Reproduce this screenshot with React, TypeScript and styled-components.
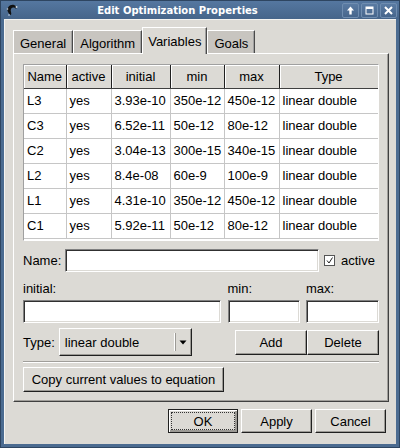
import React from "react";
import styled, { createGlobalStyle, css } from "styled-components";

const Global = createGlobalStyle`
  html, body { margin: 0; padding: 0; background: #4a6a8e; }
  body { font-family: "Liberation Sans", Arial, sans-serif; font-size: 13px; color: #000; }
  * { box-sizing: border-box; }
`;

const BG = "#dcdad5";

const Window = styled.div`
  width: 400px;
  height: 448px;
  display: flex;
  flex-direction: column;
  background: #4b6b90;
  border: 1px solid #2e4561;
`;

const TitleBar = styled.div`
  height: 18px;
  display: flex;
  align-items: center;
  padding: 0 2px 0 4px;
  background: linear-gradient(#5577a0, #46658a);
`;

const TitleText = styled.div`
  flex: 1;
  text-align: center;
  color: #fff;
  font-family: "DejaVu Sans", sans-serif;
  font-weight: bold;
  font-size: 10px;
  padding-right: 6px;
`;

const TitleButtons = styled.div`
  display: flex;
  gap: 2px;
`;

const TitleButton = styled.div`
  width: 17px;
  height: 15px;
  border-radius: 2px;
  border: 1px solid #6f8db0;
  background: linear-gradient(#5a7ba3, #47668c);
  display: flex;
  align-items: center;
  justify-content: center;
`;

const Client = styled.div`
  flex: 1;
  margin: 0 3px 3px 3px;
  background: ${BG};
  border-top: 1px solid #f4f3f0;
  border-left: 1px solid #f4f3f0;
  padding: 7px 8px 0 8px;
  display: flex;
  flex-direction: column;
`;

const TabBar = styled.div`
  display: flex;
  align-items: flex-end;
  height: 26px;
`;

const Tab = styled.div<{ $active?: boolean }>`
  height: ${(p) => (p.$active ? 27 : 23)}px;
  padding: 0 ${(p) => (p.$active ? 5 : 6)}px;
  display: flex;
  align-items: center;
  background: ${(p) => (p.$active ? BG : "#c8c5c0")};
  border-top: 1px solid #fff;
  border-left: 1px solid #fff;
  border-right: 1px solid #4a4a4a;
  box-shadow: inset -1px 0 0 #a0a0a0;
  margin-bottom: ${(p) => (p.$active ? -1 : 0)}px;
  position: relative;
  z-index: ${(p) => (p.$active ? 2 : 1)};
  padding-top: ${(p) => (p.$active ? 0 : 2)}px;
`;

const Pane = styled.div`
  height: 349px;
  width: 376px;
  border-top: 1px solid #fff;
  border-left: 1px solid #fff;
  border-right: 1px solid #404040;
  border-bottom: 1px solid #404040;
  box-shadow: inset -1px -1px 0 #a09e9a;
  padding: 10px 9px 8px 9px;
  display: flex;
  flex-direction: column;
`;

const TableFrame = styled.div`
  width: 356px;
  height: 177px;
  border-top: 1px solid #a0a0a0;
  border-left: 1px solid #a0a0a0;
  border-right: 1px solid #fff;
  border-bottom: 1px solid #fff;
  background: #fff;
  overflow: hidden;
`;

const Grid = styled.table`
  border-collapse: collapse;
  table-layout: fixed;
  width: 354px;
`;

const HeadCell = styled.th`
  height: 23px;
  padding: 0;
  font-weight: normal;
  text-align: center;
  background: ${BG};
  border-right: 1px solid #202020;
  border-bottom: 1px solid #404040;
  box-shadow: inset 1px 1px 0 #fff;
  white-space: nowrap;
`;

const Cell = styled.td`
  height: 25px;
  padding: 0 0 0 3px;
  border-right: 1px solid #c6c6c6;
  border-bottom: 1px solid #c6c6c6;
  white-space: nowrap;
  overflow: hidden;
`;

const Row = styled.div<{ $mt?: number; $h?: number }>`
  display: flex;
  align-items: center;
  margin-top: ${(p) => p.$mt ?? 0}px;
  height: ${(p) => p.$h ?? 23}px;
`;

const Label = styled.span<{ $w?: number }>`
  ${(p) => p.$w && css`width: ${p.$w}px;`}
  white-space: nowrap;
`;

const sunken = css`
  background: #fff;
  border-top: 1px solid #808080;
  border-left: 1px solid #808080;
  border-right: 1px solid #fff;
  border-bottom: 1px solid #fff;
  box-shadow: inset 1px 1px 0 #303030, inset -1px -1px 0 #dcdad5;
`;

const Input = styled.div<{ $w: number }>`
  ${sunken}
  width: ${(p) => p.$w}px;
  height: 23px;
`;

const Check = styled.div`
  width: 11px;
  height: 11px;
  border: 1px solid #555;
  background: #fff;
  margin-left: 5px;
  margin-right: 6px;
  display: flex;
  align-items: center;
  justify-content: center;
`;

const FormGrid = styled.div`
  display: grid;
  grid-template-columns: 198px 72px 73px;
  column-gap: 6.5px;
  margin-top: 4px;
`;

const GridLabel = styled.div`
  height: 24px;
  display: flex;
  align-items: center;
`;

const raised = css`
  background: ${BG};
  border-top: 1px solid #fff;
  border-left: 1px solid #fff;
  border-right: 1px solid #202020;
  border-bottom: 1px solid #202020;
  box-shadow: inset -1px -1px 0 #9c9a95;
`;

const Button = styled.div<{ $w: number; $h?: number; $default?: boolean }>`
  ${raised}
  width: ${(p) => p.$w}px;
  height: ${(p) => p.$h ?? 24}px;
  display: flex;
  align-items: center;
  justify-content: center;
  white-space: nowrap;
  ${(p) =>
    p.$default &&
    css`
      border: 1px solid #202020;
      box-shadow: inset 1px 1px 0 #fff, inset -2px -2px 0 #9c9a95;
      position: relative;
      &::after {
        content: "";
        position: absolute;
        inset: 2px;
        border: 1px dotted #333;
      }
    `}
`;

const Combo = styled.div`
  ${raised}
  width: 133px;
  height: 28px;
  display: flex;
  align-items: center;
  margin-left: 4px;
`;

const ComboText = styled.div`
  flex: 1;
  padding-left: 5px;
`;

const ComboArrow = styled.div`
  width: 16px;
  height: 18px;
  border-left: 1px solid #9c9a95;
  box-shadow: -1px 0 0 #fff;
  display: flex;
  align-items: center;
  justify-content: center;
`;

const Separator = styled.div`
  height: 2px;
  border-top: 1px solid #a09e9a;
  border-bottom: 1px solid #fff;
  margin-top: 5px;
`;

const Spacer = styled.div`
  flex: 1;
`;

const BottomBar = styled.div`
  display: flex;
  justify-content: flex-end;
  gap: 3px;
  margin-top: 7px;
  padding-right: 2px;
`;

const headers = ["Name", "active", "initial", "min", "max", "Type"];
const widths = [42, 45, 59, 54, 55, 99];
const rows = [
  ["L3", "yes", "3.93e-10", "350e-12", "450e-12", "linear double"],
  ["C3", "yes", "6.52e-11", "50e-12", "80e-12", "linear double"],
  ["C2", "yes", "3.04e-13", "300e-15", "340e-15", "linear double"],
  ["L2", "yes", "8.4e-08", "60e-9", "100e-9", "linear double"],
  ["L1", "yes", "4.31e-10", "350e-12", "450e-12", "linear double"],
  ["C1", "yes", "5.92e-11", "50e-12", "80e-12", "linear double"],
];

export default function App() {
  return (
    <>
      <Global />
      <Window>
        <TitleBar>
          <svg width="14" height="14" viewBox="0 0 14 14">
            <path d="M3 9 C1 5 5 1 9 2 C12 3 12 5 11 6 C10 4 7 4 6 6 C5 8 7 10 6 12 C5 12 4 11 3 9Z" fill="#111" />
            <circle cx="11.5" cy="4" r="1" fill="#cfd8e3" />
            <circle cx="2.5" cy="6" r="0.8" fill="#cfd8e3" />
            <circle cx="4" cy="12" r="0.8" fill="#cfd8e3" />
          </svg>
          <TitleText>Edit Optimization Properties</TitleText>
          <TitleButtons>
            <TitleButton>
              <svg width="9" height="9" viewBox="0 0 9 9">
                <path d="M4.5 0.5 L8 4.5 H5.7 V8.5 H3.3 V4.5 H1Z" fill="#fff" />
              </svg>
            </TitleButton>
            <TitleButton>
              <svg width="9" height="9" viewBox="0 0 9 9">
                <rect x="1" y="1" width="7" height="7" fill="none" stroke="#fff" strokeWidth="1" />
                <rect x="1" y="1" width="7" height="2" fill="#fff" />
              </svg>
            </TitleButton>
            <TitleButton>
              <svg width="9" height="9" viewBox="0 0 9 9">
                <path d="M1 1 L8 8 M8 1 L1 8" stroke="#fff" strokeWidth="2" />
              </svg>
            </TitleButton>
          </TitleButtons>
        </TitleBar>
        <Client>
          <TabBar>
            <Tab>General</Tab>
            <Tab>Algorithm</Tab>
            <Tab $active>Variables</Tab>
            <Tab>Goals</Tab>
          </TabBar>
          <Pane>
            <TableFrame>
              <Grid>
                <colgroup>
                  {widths.map((w, i) => (
                    <col key={i} style={{ width: w }} />
                  ))}
                </colgroup>
                <thead>
                  <tr>
                    {headers.map((h) => (
                      <HeadCell key={h}>{h}</HeadCell>
                    ))}
                  </tr>
                </thead>
                <tbody>
                  {rows.map((r) => (
                    <tr key={r[0]}>
                      {r.map((c, i) => (
                        <Cell key={i}>{c}</Cell>
                      ))}
                    </tr>
                  ))}
                </tbody>
              </Grid>
            </TableFrame>
            <Row $mt={8}>
              <Label $w={42}>Name:</Label>
              <Input $w={254} />
              <Check>
                <svg width="9" height="9" viewBox="0 0 9 9">
                  <path d="M2 4.5 L4 7 L7.5 1.5" fill="none" stroke="#222" strokeWidth="1" />
                </svg>
              </Check>
              <Label>active</Label>
            </Row>
            <FormGrid>
              <GridLabel>initial:</GridLabel>
              <GridLabel>min:</GridLabel>
              <GridLabel>max:</GridLabel>
              <Input $w={198} />
              <Input $w={72} />
              <Input $w={73} />
            </FormGrid>
            <Row $mt={5} $h={28}>
              <Label>Type:</Label>
              <Combo>
                <ComboText>linear double</ComboText>
                <ComboArrow>
                  <svg width="8" height="5" viewBox="0 0 8 5">
                    <path d="M0.5 0.5 H7.5 L4 4.5Z" fill="#000" />
                  </svg>
                </ComboArrow>
              </Combo>
              <Spacer />
              <Button $w={72} $h={25}>Add</Button>
              <Button $w={72} $h={25}>Delete</Button>
            </Row>
            <Separator />
            <Row $mt={4} $h={25}>
              <Button $w={201} $h={25}>Copy current values to equation</Button>
            </Row>
          </Pane>
          <BottomBar>
            <Button $w={70} $default>OK</Button>
            <Button $w={71}>Apply</Button>
            <Button $w={71}>Cancel</Button>
          </BottomBar>
        </Client>
      </Window>
    </>
  );
}
